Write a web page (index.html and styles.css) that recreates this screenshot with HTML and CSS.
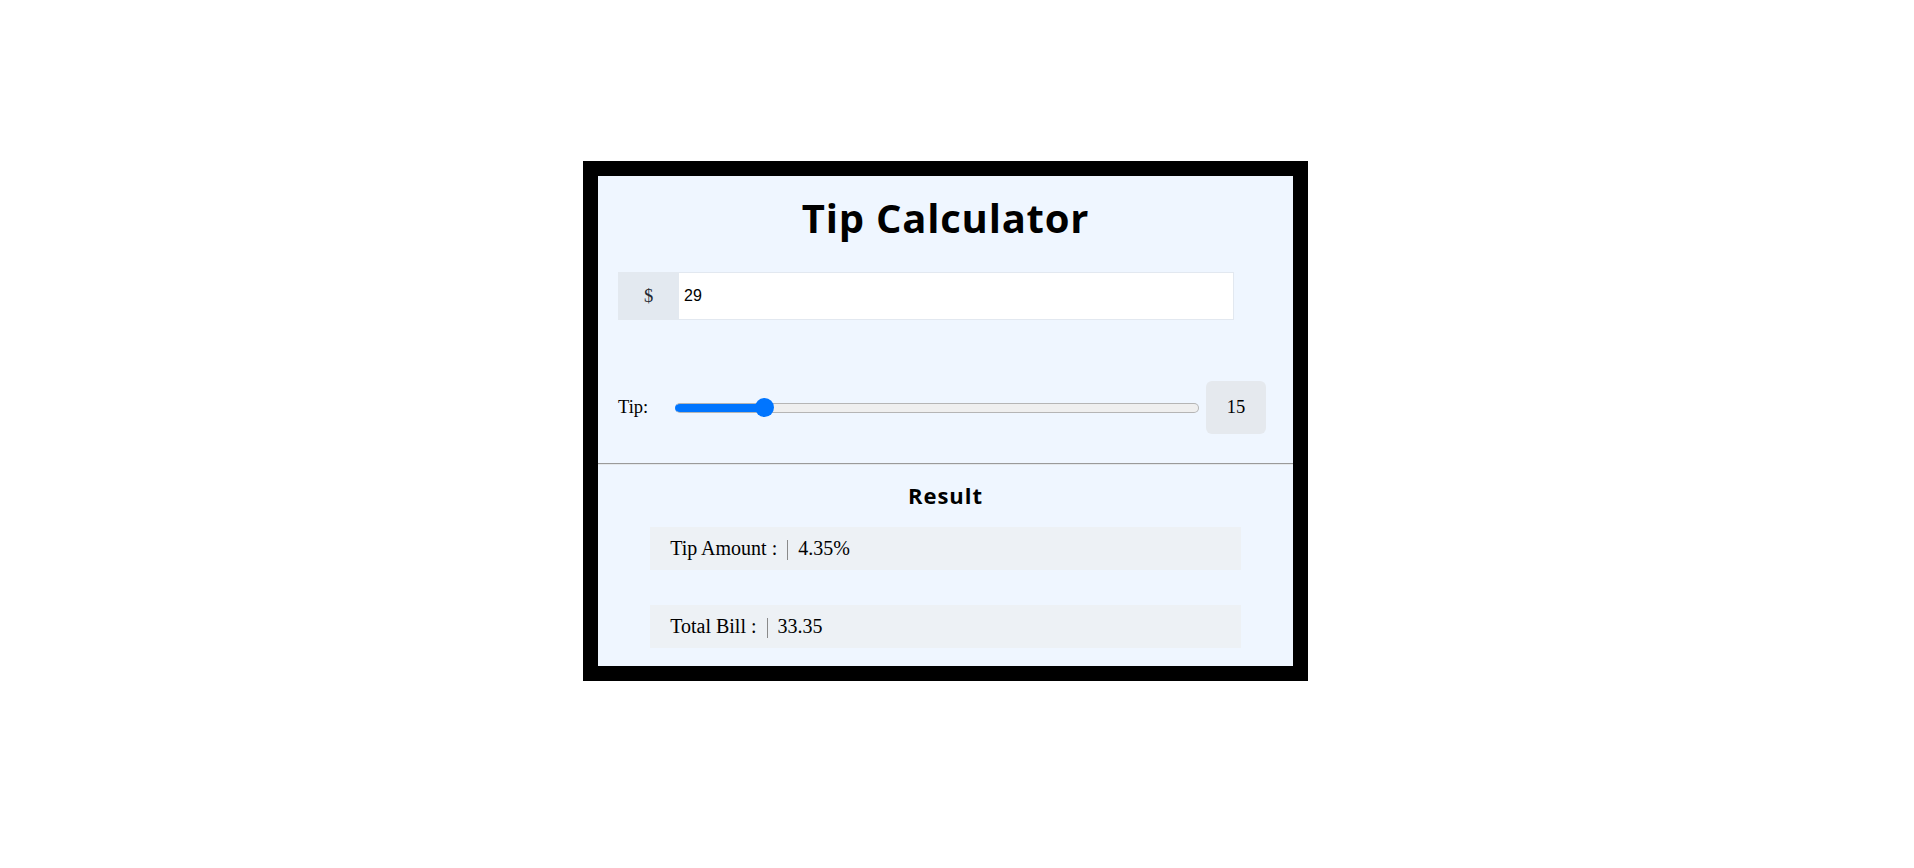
FILE: index.html
```html
<!DOCTYPE html>
<html lang="en">
<head>
<meta charset="utf-8">
<title>Tip Calculator</title>
<link rel="stylesheet" href="styles.css">
</head>
<body>
<div class="page">
  <div class="card">
    <h1 class="title">Tip Calculator</h1>
    <div class="bill-group">
      <span class="addon">$</span>
      <input class="bill-input" type="text" value="29">
    </div>
    <div class="tip-row">
      <label class="tip-label" for="tip">Tip:</label>
      <input class="tip-range" id="tip" type="range" min="0" max="95" value="15">
      <span class="tip-value">15</span>
    </div>
    <hr class="divider">
    <h2 class="result-title">Result</h2>
    <div class="result-row first">
      <span class="result-label">Tip Amount :</span>
      <span class="sep"></span>
      <span class="result-value">4.35%</span>
    </div>
    <div class="result-row second">
      <span class="result-label">Total Bill :</span>
      <span class="sep"></span>
      <span class="result-value">33.35</span>
    </div>
  </div>
</div>
</body>
</html>
```

FILE: styles.css
```css
html, body {
  margin: 0;
  padding: 0;
  background: #ffffff;
}

body {
  font-family: "Liberation Serif", "Times New Roman", serif;
  color: #000;
}

.page {
  display: flex;
  justify-content: center;
  padding: 161px 23px 0 0;
}

.card {
  width: 695px;
  height: 490px;
  border: 15px solid #000;
  background: #eff6ff;
}

.title {
  margin: 18px 0 0;
  font-family: "Open Sans", Lato, sans-serif;
  font-weight: 700;
  font-size: 40px;
  line-height: 48px;
  letter-spacing: 0.8px;
  text-align: center;
}

.bill-group {
  display: flex;
  width: 616px;
  height: 48px;
  margin: 30px 0 0 20px;
}

.addon {
  width: 61px;
  display: flex;
  align-items: center;
  justify-content: center;
  background: #e3e9f0;
  font-size: 18.5px;
  color: #1f2933;
}

.bill-input {
  flex: 1;
  margin: 0;
  padding: 0 5px;
  border: 1px solid #e2e8f0;
  border-left: none;
  background: #fff;
  font-family: "Liberation Sans", Arial, sans-serif;
  font-size: 16px;
  color: #000;
  outline: none;
}

.tip-row {
  display: flex;
  align-items: center;
  height: 53px;
  margin: 61px 0 0;
  padding: 0 27px 0 20px;
}

.tip-label {
  width: 55px;
  font-size: 18.5px;
}

.tip-range {
  flex: 1;
  -webkit-appearance: none;
  appearance: none;
  height: 10px;
  margin: 0 2px;
  box-sizing: border-box;
  border: 1px solid #b5b5b5;
  border-left-color: #0075ff;
  border-radius: 5px;
  background: linear-gradient(to right, #0075ff 0 89px, #efefef 89px);
  outline: none;
}

.tip-range::-webkit-slider-thumb {
  -webkit-appearance: none;
  appearance: none;
  width: 19px;
  height: 19px;
  border: none;
  border-radius: 50%;
  background: #0075ff;
}

.tip-value {
  width: 60px;
  height: 53px;
  margin-left: 5px;
  display: flex;
  align-items: center;
  justify-content: center;
  background: #e5e9ee;
  border-radius: 6px;
  font-size: 18.5px;
}

.divider {
  margin: 29px 0 0;
  height: 0;
  border: none;
  border-top: 1px solid #9a9a9a;
  border-bottom: 1px solid #e4e8ec;
}

.result-title {
  margin: 17px 0 0;
  font-family: "Open Sans", Lato, sans-serif;
  font-weight: 700;
  font-size: 22px;
  line-height: 26px;
  letter-spacing: 1px;
  text-align: center;
}

.result-row {
  display: flex;
  align-items: center;
  width: 85%;
  height: 43px;
  margin: 0 auto;
  padding-left: 20px;
  box-sizing: border-box;
  background: #edf1f5;
  font-size: 20px;
}

.result-row.first {
  margin-top: 19px;
}

.result-row.second {
  margin-top: 35px;
}

.sep {
  width: 1px;
  height: 20px;
  margin: 2px 10px 0 10px;
  background: #8a8a8a;
}
```
